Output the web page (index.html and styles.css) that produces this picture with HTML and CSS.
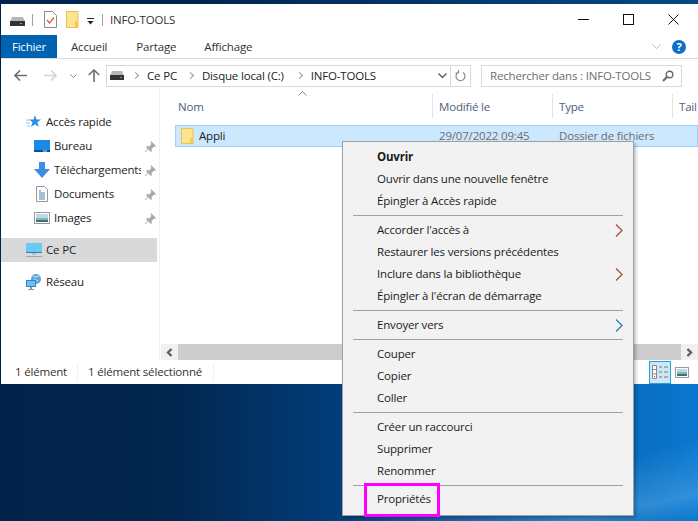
FILE: index.html
```html
<!DOCTYPE html>
<html lang="fr">

<head>
  <meta charset="UTF-8">
  <title>INFO-TOOLS</title>
  <link rel="stylesheet" href="styles.css">
</head>

<body>
  <div class="window">
    <div class="titlebar">
      <svg class="qa-drive" width="15" height="10" viewBox="0 0 15 10"><path d="M2 1h11l2 5H0z" fill="#b5b5b5"/><rect y="5" width="15" height="5" fill="#333"/><rect x="10" y="7" width="2" height="1" fill="#4ec24e"/></svg>
      <span class="qa-sep"></span>
      <svg class="qa-doc" width="13" height="17" viewBox="0 0 13 17"><path d="M.5.5h8l4 4v12H.5z" fill="#fff" stroke="#8a8a8a"/><path d="M3 9l2.500 3L10 6.500" fill="none" stroke="#e4591f" stroke-width="1.300"/></svg>
      <svg class="qa-folder" width="13" height="17" viewBox="0 0 13 17"><rect x=".5" y=".5" width="11.500" height="16" fill="#fde58f" stroke="#e8c35a"/><rect x="9" y="10" width="3" height="6.500" fill="#f2c94c"/></svg>
      <svg class="qa-more" width="7" height="7" viewBox="0 0 7 7"><rect y="0" width="7" height="1" fill="#222"/><path d="M.5 3h6L3.500 6.500z" fill="#222"/></svg>
      <span class="qa-sep qa-sep-last"></span>
      <span class="title">INFO-TOOLS</span>
      <div class="controls">
        <svg width="11" height="11" viewBox="0 0 11 11"><rect y="5" width="11" height="1" fill="#111"/></svg>
        <svg width="11" height="11" viewBox="0 0 11 11"><rect x=".5" y=".5" width="10" height="10" fill="none" stroke="#111"/></svg>
        <svg width="11" height="11" viewBox="0 0 11 11"><path d="M.5.500l10 10M10.500.500l-10 10" stroke="#111" fill="none"/></svg>
      </div>
    </div>

    <div class="tabs">
      <span class="tab tab-file">Fichier</span>
      <span class="tab tab-home">Accueil</span>
      <span class="tab tab-share">Partage</span>
      <span class="tab tab-view">Affichage</span>
      <svg class="ribbon-chevron" width="9" height="5" viewBox="0 0 9 5"><path d="M.5.500l4 4 4-4" fill="none" stroke="#b5b5b5"/></svg>
      <span class="help">?</span>
    </div>

    <div class="navrow">
      <svg class="nav-back" width="13" height="11" viewBox="0 0 13 11"><path d="M6 .5l-5 5 5 5M1 5.500h12" fill="none" stroke="#707070" stroke-width="1.600"/></svg>
      <svg class="nav-forward" width="13" height="11" viewBox="0 0 13 11"><path d="M7 .5l5 5-5 5M12 5.500H0" fill="none" stroke="#d4d4d4" stroke-width="1.600"/></svg>
      <svg class="nav-recent" width="7" height="4" viewBox="0 0 7 4"><path d="M.5.500l3 3 3-3" fill="none" stroke="#8a8a8a"/></svg>
      <svg class="nav-up" width="12" height="13" viewBox="0 0 12 13"><path d="M.8 6l5.200-5 5.200 5M6 1v12" fill="none" stroke="#707070" stroke-width="1.600"/></svg>
      <div class="address">
        <svg class="addr-drive" width="14" height="9" viewBox="0 0 14 9"><path d="M2 0h10l2 5H0z" fill="#b5b5b5"/><rect y="4" width="14" height="5" fill="#333"/><rect x="10" y="6" width="2" height="1" fill="#4ec24e"/></svg>
        <span class="crumb-arrow"></span>
        <span class="crumb crumb-pc">Ce PC</span>
        <span class="crumb-arrow"></span>
        <span class="crumb crumb-disk">Disque local (C:)</span>
        <span class="crumb-arrow"></span>
        <span class="crumb">INFO-TOOLS</span>
        <svg class="addr-drop" width="9" height="5" viewBox="0 0 9 5"><path d="M.5.500l4 4 4-4" fill="none" stroke="#555" stroke-width="1.300"/></svg>
        <span class="addr-refresh">
          <svg width="11" height="12" viewBox="0 0 11 12"><path d="M3 2.500a4.500 4.500 0 1 0 5 0M3.500 0v3H.5" fill="none" stroke="#8a8a8a" stroke-width="1.200"/></svg>
        </span>
      </div>
      <div class="search">
        <span>Rechercher dans : INFO-TOOLS</span>
        <svg width="12" height="12" viewBox="0 0 12 12"><circle cx="7.500" cy="4.500" r="3.300" fill="none" stroke="#666" stroke-width="1.400"/><path d="M5 7L1 11" stroke="#666" stroke-width="2"/></svg>
      </div>
    </div>

    <div class="content">
      <div class="sidebar">
        <div class="side-item side-top side-first">
          <svg width="15" height="14" viewBox="0 0 15 14"><path d="M9 0l1.500 4.500H15l-3.600 2.800L12.800 12 9 9.200 5 12l1.500-4.700L3 4.500h4.500z" fill="#2f8fe0"/><path d="M0 5h3M0 8h4M1 11h3" stroke="#8cc4ee"/></svg>
          <span class="side-label">Accès rapide</span>
        </div>
        <div class="side-item side-sub">
          <svg width="16" height="12" viewBox="0 0 16 12"><rect width="16" height="12" fill="#1a8ae8"/><rect y="10" width="16" height="2" fill="#0b4f8f"/><rect x="9" y="10.500" width="4" height="1" fill="#cfe6fa"/></svg>
          <span class="side-label">Bureau</span>
          <svg class="pin" width="11" height="11" viewBox="0 0 11 11"><path d="M6 0l5 5-1 1-1-.5-2.500 2.500.5 2-1 1L1 6l1-1 2 .5L6.500 3 5.500 1z" fill="#a8a8a8"/><path d="M3 8l-3 3" stroke="#a8a8a8"/></svg>
        </div>
        <div class="side-item side-sub">
          <svg width="16" height="16" viewBox="0 0 16 16"><path d="M5 0h6v7h5l-8 9-8-9h5z" fill="#3a8fe2"/></svg>
          <span class="side-label">Téléchargements</span>
          <svg class="pin" width="11" height="11" viewBox="0 0 11 11"><path d="M6 0l5 5-1 1-1-.5-2.500 2.500.5 2-1 1L1 6l1-1 2 .5L6.500 3 5.500 1z" fill="#a8a8a8"/><path d="M3 8l-3 3" stroke="#a8a8a8"/></svg>
        </div>
        <div class="side-item side-sub">
          <svg width="16" height="16" viewBox="0 0 16 16"><path d="M2.500.5h8l3 3v12h-11z" fill="#fff" stroke="#999"/><path d="M5 5h2M5 7h6M5 9h6M5 11h6M5 13h6" stroke="#4a7fa8"/></svg>
          <span class="side-label">Documents</span>
          <svg class="pin" width="11" height="11" viewBox="0 0 11 11"><path d="M6 0l5 5-1 1-1-.5-2.500 2.500.5 2-1 1L1 6l1-1 2 .5L6.500 3 5.500 1z" fill="#a8a8a8"/><path d="M3 8l-3 3" stroke="#a8a8a8"/></svg>
        </div>
        <div class="side-item side-sub">
          <svg width="16" height="12" viewBox="0 0 16 12"><rect x=".5" y=".5" width="15" height="11" fill="#fff" stroke="#999"/><rect x="2" y="2" width="12" height="4" fill="#b9d9ee"/><rect x="2" y="6" width="12" height="2" fill="#8fb59a"/><rect x="2" y="8" width="12" height="2" fill="#3f6d8c"/></svg>
          <span class="side-label">Images</span>
          <svg class="pin" width="11" height="11" viewBox="0 0 11 11"><path d="M6 0l5 5-1 1-1-.5-2.500 2.500.5 2-1 1L1 6l1-1 2 .5L6.500 3 5.500 1z" fill="#a8a8a8"/><path d="M3 8l-3 3" stroke="#a8a8a8"/></svg>
        </div>
        <div class="side-item side-top side-active">
          <svg width="16" height="15" viewBox="0 0 16 15"><rect width="16" height="10" fill="#6cc8f4"/><rect y="9" width="16" height="1" fill="#2a7fb8"/><rect x="6" y="10" width="4" height="2" fill="#a9c3d6"/><rect y="13" width="16" height="1" fill="#8fa9bd"/></svg>
          <span class="side-label">Ce PC</span>
        </div>
        <div class="side-item side-top side-net">
          <svg width="16" height="16" viewBox="0 0 16 16"><circle cx="10" cy="5" r="5" fill="#5ba6dc"/><path d="M7 2q3 2 6 0M8 6q2-1 4 1" stroke="#cfe6f5" fill="none"/><rect y="6" width="10" height="7" fill="#2e86c9"/><rect x="1" y="7" width="8" height="5" fill="#6cc0ee"/><rect x="4" y="13" width="2" height="2" fill="#8a9aa6"/><rect x="2" y="15" width="6" height="1" fill="#8a9aa6"/></svg>
          <span class="side-label">Réseau</span>
        </div>
      </div>

      <div class="files">
        <div class="columns">
          <svg class="sort-caret" width="9" height="5" viewBox="0 0 9 5"><path d="M.5 4.500l4-4 4 4" fill="none" stroke="#8a8a8a"/></svg>
          <span class="col col-name">Nom</span>
          <span class="col col-date">Modifié le</span>
          <span class="col col-type">Type</span>
          <span class="col col-size">Tail</span>
        </div>
        <div class="row">
          <svg class="row-icon" width="13" height="16" viewBox="0 0 13 16"><rect x=".5" y=".5" width="11.500" height="15" fill="#fde58f" stroke="#e8c35a"/><rect x="9" y="10" width="3" height="5.500" fill="#f2c94c"/></svg>
          <span class="row-name">Appli</span>
          <span class="row-date">29/07/2022 09:45</span>
          <span class="row-type">Dossier de fichiers</span>
        </div>
        <div class="hscroll">
          <span class="scroll-btn">
            <svg width="7" height="9" viewBox="0 0 7 9"><path d="M5.500 1L2 4.500 5.500 8" fill="none" stroke="#606060" stroke-width="2.400"/></svg>
          </span>
          <span class="scroll-thumb"></span>
          <span class="scroll-btn">
            <svg width="7" height="9" viewBox="0 0 7 9"><path d="M1.500 1L5 4.500 1.500 8" fill="none" stroke="#606060" stroke-width="2.400"/></svg>
          </span>
        </div>
      </div>
    </div>

    <div class="statusbar">
      <span class="status-count">1 élément</span>
      <span class="status-selected">1 élément sélectionné</span>
      <span class="view-details">
        <svg width="16" height="14" viewBox="0 0 16 14"><path d="M.5.500h4v13h-4zM.5 4.500h4M.5 9h4" fill="#fff" stroke="#888"/><path d="M7 2h3M12 2h4M7 7h3M12 7h4M7 12h3M12 12h4" stroke="#777"/><rect x="2" y="11" width="1" height="1" fill="#c33"/></svg>
      </span>
      <svg class="view-large" width="14" height="11" viewBox="0 0 14 11"><rect x=".5" y=".5" width="13" height="10" fill="#fff" stroke="#999"/><rect x="2" y="2" width="10" height="3" fill="#b9d9ee"/><rect x="2" y="5" width="10" height="2" fill="#8fb59a"/><rect x="2" y="7" width="10" height="2" fill="#3f6d8c"/></svg>
    </div>
  </div>

  <div class="menu">
    <div class="menu-item menu-default">Ouvrir</div>
    <div class="menu-item">Ouvrir dans une nouvelle fenêtre</div>
    <div class="menu-item">Épingler à Accès rapide</div>
    <div class="menu-sep"></div>
    <div class="menu-item">Accorder l'accès à<svg class="menu-arrow arrow-red" width="8" height="13" viewBox="0 0 8 13"><path d="M1 .5l6 6-6 6"/></svg></div>
    <div class="menu-item">Restaurer les versions précédentes</div>
    <div class="menu-item">Inclure dans la bibliothèque<svg class="menu-arrow arrow-red" width="8" height="13" viewBox="0 0 8 13"><path d="M1 .5l6 6-6 6"/></svg></div>
    <div class="menu-item">Épingler à l'écran de démarrage</div>
    <div class="menu-sep"></div>
    <div class="menu-item">Envoyer vers<svg class="menu-arrow arrow-blue" width="8" height="13" viewBox="0 0 8 13"><path d="M1 .5l6 6-6 6"/></svg></div>
    <div class="menu-sep"></div>
    <div class="menu-item">Couper</div>
    <div class="menu-item">Copier</div>
    <div class="menu-item">Coller</div>
    <div class="menu-sep"></div>
    <div class="menu-item">Créer un raccourci</div>
    <div class="menu-item">Supprimer</div>
    <div class="menu-item">Renommer</div>
    <div class="menu-sep menu-sep-short"></div>
    <div class="menu-item">Propriétés</div>
    <div class="highlight"></div>
  </div>
</body>

</html>
```

FILE: styles.css
```css
/* bureau */
body {
  margin: 0;
  width: 698px;
  height: 521px;
  overflow: hidden;
  position: relative;
  font-family: "Open Sans", "Liberation Sans", sans-serif;
  font-size: 11.5px;
  letter-spacing: -0.18px;
  color: #1a1a1a;
  background:
    linear-gradient(180deg, rgba(2, 34, 74, 0.55) 0, transparent 384px),
    linear-gradient(168deg, transparent 88%, rgba(120, 190, 240, 0.35) 96%, transparent 100%),
    linear-gradient(90deg, #02224a 0%, #02264f 25%, #023f7c 50%, #035ca8 75%, #0a78d0 100%);
}

/* fenetre */
.window {
  margin: 4px 0 0 1px;
  height: 380px;
  background: #fff;
  display: flex;
  flex-direction: column;
}

.titlebar {
  height: 31px;
  display: flex;
  align-items: center;
  flex: none;
}

.qa-drive {
  margin-left: 9px;
  margin-top: 2px;
}

.qa-sep {
  width: 1px;
  height: 12px;
  background: #a0a0a0;
  margin-left: 7px;
}

.qa-doc {
  margin-left: 11px;
}

.qa-folder {
  margin-left: 9px;
}

.qa-more {
  margin-left: 8px;
  margin-top: 3px;
}

.qa-sep-last {
  margin-left: 8px;
}

.title {
  margin-left: 7px;
  color: #333;
}

.controls {
  margin-left: auto;
  margin-right: 19px;
  display: flex;
  gap: 34px;
}

/* onglets */
.tabs {
  height: 24px;
  flex: none;
  display: flex;
  align-items: center;
  border-bottom: 1px solid #dadada;
  box-sizing: border-box;
}

.tab {
  color: #333;
}

.tab-file {
  width: 56px;
  height: 23px;
  line-height: 23px;
  text-align: center;
  background: #0063b1;
  color: #fff;
}

.tab-home {
  margin-left: 14px;
}

.tab-share {
  margin-left: 29px;
}

.tab-view {
  margin-left: 28px;
}

.ribbon-chevron {
  margin-left: auto;
}

.help {
  width: 14px;
  height: 14px;
  line-height: 14px;
  margin: 0 12px 0 11px;
  border-radius: 50%;
  background: #0f6fc6;
  color: #fff;
  text-align: center;
  font-weight: 700;
  font-size: 11px;
}

/* barre d'adresse */
.navrow {
  height: 29px;
  flex: none;
  display: flex;
  align-items: center;
  box-sizing: border-box;
  padding-top: 4px;
}

.nav-back {
  margin-left: 13px;
}

.nav-forward {
  margin-left: 17px;
}

.nav-recent {
  margin-left: 13px;
}

.nav-up {
  margin-left: 11px;
}

.address {
  width: 365px;
  height: 22px;
  margin-left: 6px;
  border: 1px solid #d9d9d9;
  box-sizing: border-box;
  display: flex;
  align-items: center;
  color: #222;
}

.addr-drive {
  margin-left: 3px;
}

.crumb-arrow {
  width: 4px;
  height: 4px;
  margin: 0 9px 0 9px;
  border-top: 1.500px solid #999;
  border-right: 1.500px solid #999;
  transform: rotate(45deg);
}

.crumb-pc {
  margin-right: 2px;
}

.crumb-disk {
  margin-right: 4px;
}

.addr-drop {
  margin-left: auto;
  margin-right: 3px;
}

.addr-refresh {
  width: 19px;
  height: 20px;
  border-left: 1px solid #d9d9d9;
  display: flex;
  align-items: center;
  justify-content: center;
}

.search {
  width: 201px;
  height: 22px;
  margin-left: 10px;
  padding: 0 7px 0 8px;
  border: 1px solid #d9d9d9;
  box-sizing: border-box;
  display: flex;
  align-items: center;
  justify-content: space-between;
  color: #6d6d6d;
  white-space: nowrap;
}

/* contenu */
.content {
  flex: 1;
  display: flex;
  min-height: 0;
}

.sidebar {
  width: 158px;
  flex: none;
  border-right: 1px solid #f0f0f0;
  box-sizing: content-box;
}

.side-item {
  height: 24px;
  display: flex;
  align-items: center;
  color: #222;
}

.side-label {
  padding-bottom: 2px;
}

.side-first {
  margin-top: 22px;
}

.side-top {
  padding-left: 25px;
}

.side-top .side-label {
  margin-left: 5px;
}

.side-active .side-label,
.side-net .side-label {
  margin-left: 4px;
}

.side-sub {
  padding-left: 33px;
}

.side-sub svg:first-child {
  width: 16px;
  flex: none;
}

.side-sub .side-label {
  margin-left: 4px;
  width: 87px;
  overflow: hidden;
  white-space: nowrap;
}

.pin {
  margin-left: 4px;
}

.side-active {
  width: 156px;
  box-sizing: border-box;
  margin-top: 8px;
  background: #d9d9d9;
}

.side-net {
  margin-top: 8px;
}

.files {
  flex: 1;
  min-width: 0;
  display: flex;
  flex-direction: column;
  position: relative;
}

.columns {
  height: 24px;
  margin-top: 6px;
  display: flex;
  align-items: center;
  position: relative;
  color: #4c607a;
}

.sort-caret {
  position: absolute;
  left: 138px;
  top: -3px;
}

.col {
  box-sizing: border-box;
  height: 24px;
  line-height: 26px;
  padding-left: 6px;
  border-right: 1px solid #e5e5e5;
}

.col-name {
  width: 273px;
  padding-left: 18px;
}

.col-date,
.col-type {
  width: 120px;
}

.col-size {
  border-right: 0;
  white-space: nowrap;
}

.row {
  height: 22px;
  margin: 7px 0 0 15px;
  box-sizing: border-box;
  background: #cce8ff;
  border: 1px solid #99d1ff;
  display: flex;
  align-items: center;
  color: #6d6d6d;
}

.row span {
  padding-bottom: 2px;
}

.row-icon {
  margin-left: 5px;
  flex: none;
}

.row-name {
  width: 240px;
  margin-left: 5px;
  color: #222;
}

.row-date {
  width: 120px;
}

.hscroll {
  margin-top: auto;
  height: 16px;
  display: flex;
  margin-left: 1px;
}

.scroll-btn {
  width: 17px;
  background: #f0f0f0;
  display: flex;
  align-items: center;
  justify-content: center;
}

.scroll-thumb {
  flex: 1;
  background: #cdcdcd;
}

/* barre d'etat */
.statusbar {
  height: 24px;
  flex: none;
  display: flex;
  align-items: center;
  color: #333;
}

.status-count {
  margin-left: 14px;
  width: 62px;
  padding-bottom: 2px;
  border-right: 1px solid #f0f0f0;
}

.status-selected {
  margin-left: 10px;
  width: 125px;
  padding-bottom: 2px;
  border-right: 1px solid #f0f0f0;
}

.view-details {
  margin-left: auto;
  width: 22px;
  height: 23px;
  box-sizing: border-box;
  background: #cce8f6;
  border: 1px solid #26a0da;
  display: flex;
  align-items: center;
  justify-content: center;
}

.view-large {
  margin: 0 9px 0 4px;
}

/* menu contextuel */
.menu {
  position: absolute;
  left: 342px;
  top: 141px;
  width: 292px;
  height: 375px;
  box-sizing: border-box;
  padding: 4px 10px 0 2px;
  background: #f2f2f2;
  border: 1px solid #a0a0a0;
  box-shadow: 2px 2px 3px rgba(0, 0, 0, 0.25);
}

.menu-item {
  height: 22px;
  line-height: 22px;
  padding-left: 32px;
  position: relative;
  color: #1a1a1a;
  white-space: nowrap;
}

.menu-default {
  font-weight: 700;
}

.menu-sep {
  height: 7px;
  margin-left: 8px;
  position: relative;
}

.menu-sep::after {
  content: "";
  position: absolute;
  left: 0;
  right: 0;
  top: 3px;
  height: 1px;
  background: #a0a0a0;
}

.menu-sep-short {
  height: 6px;
}

.menu-arrow {
  position: absolute;
  right: 0;
  top: 5px;
  fill: none;
  stroke-width: 1.300;
}

.arrow-red {
  stroke: #a8503c;
}

.arrow-blue {
  stroke: #2f7fb8;
}

.highlight {
  position: absolute;
  left: 21px;
  top: 341px;
  width: 76px;
  height: 34px;
  box-sizing: border-box;
  border: 3px solid #ff00ff;
}
```
